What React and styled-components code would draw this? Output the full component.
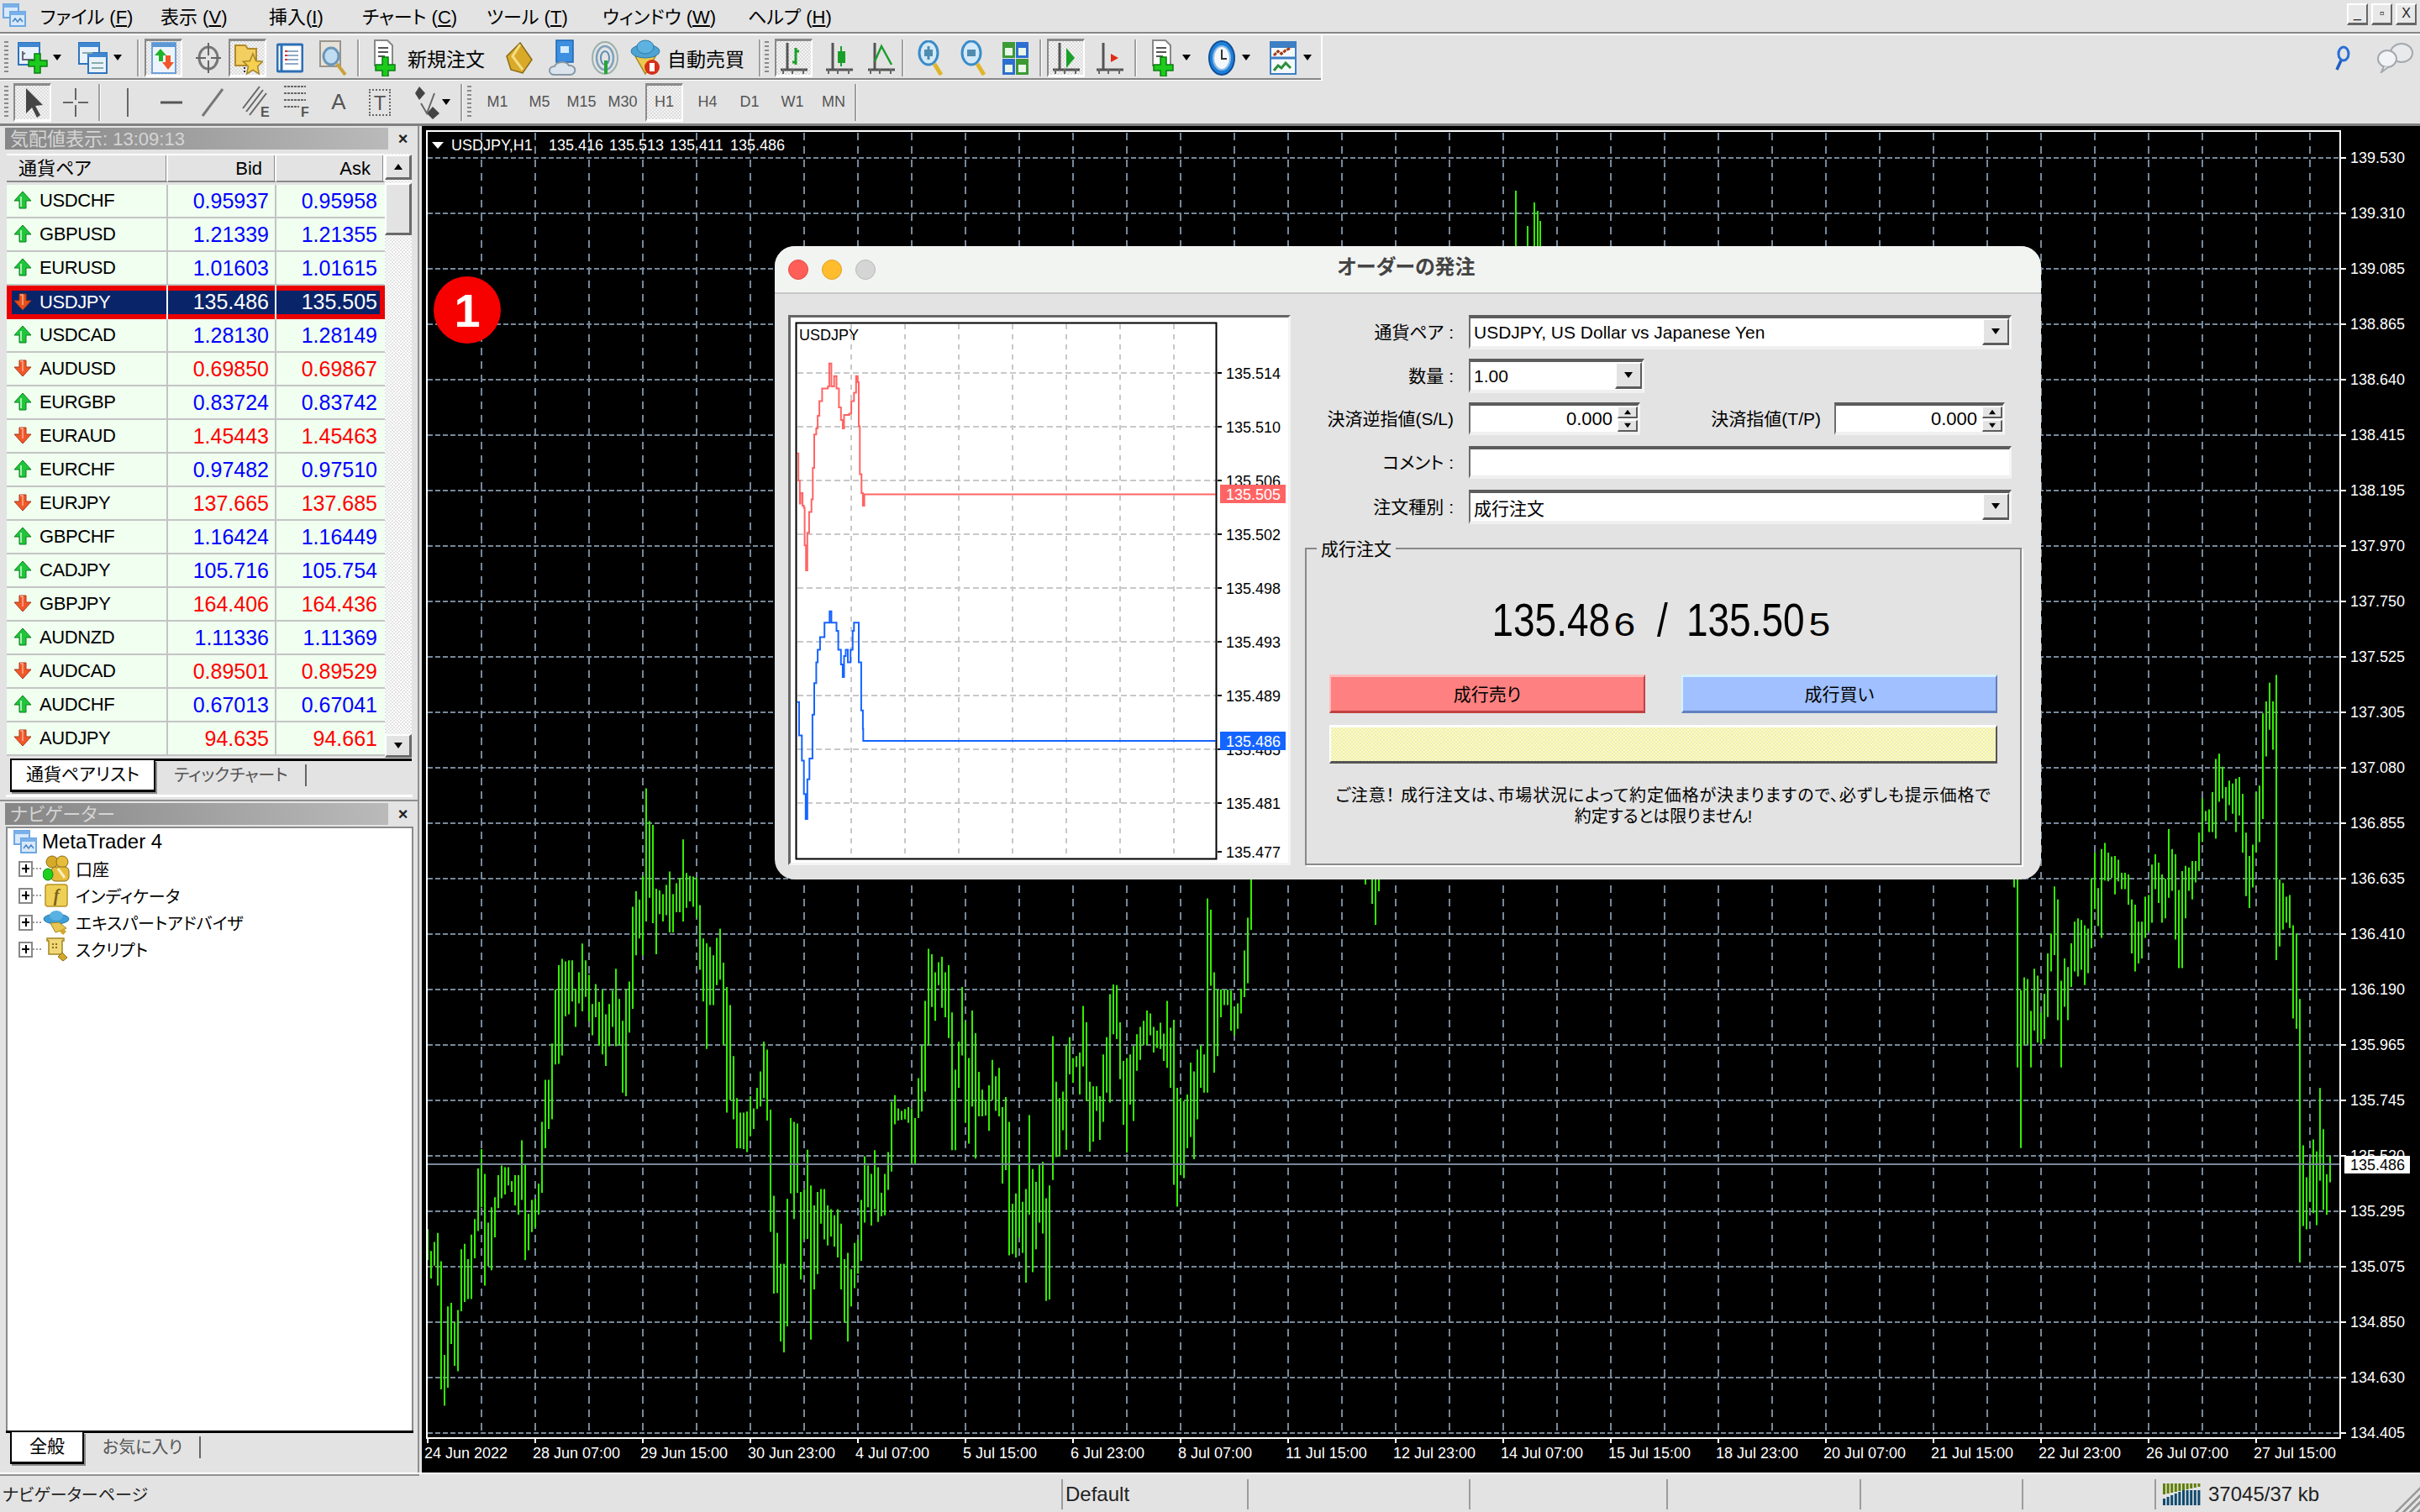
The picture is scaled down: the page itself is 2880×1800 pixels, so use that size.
import React from 'react'
import styled, { createGlobalStyle, css } from 'styled-components'

const GlobalStyle = createGlobalStyle`
  html, body { margin: 0; padding: 0; background: #e3e3e3; }
  body {
    font-family: "Liberation Sans", "Noto Sans CJK JP", sans-serif;
    font-feature-settings: "palt";
    color: #000;
  }
  * { box-sizing: border-box; }
`

const checker = (a, b, s = 4) => css`
  background: repeating-conic-gradient(${a} 0 25%, ${b} 0 50%) 0 0 / ${s}px ${s}px;
`

const Screen = styled.div`
  width: 2880px;
  height: 1800px;
  display: flex;
  flex-direction: column;
  overflow: hidden;
  background: #e3e3e3;
`

/* menu */
const MenuBar = styled.div`
  height: 42px;
  flex: none;
  display: flex;
  align-items: flex-start;
  border-bottom: 2px solid #fff;
  box-shadow: inset 0 -2px 0 #868686;
  padding-left: 3px;
`
const AppIcon = styled.div`
  width: 45px;
  padding-top: 4px;
`
const MenuItem = styled.div`
  width: ${p => p.$w}px;
  margin-left: ${p => p.$ml || 0}px;
  height: 38px;
  line-height: 41px;
  font-size: 22px;
  white-space: nowrap;
  u { text-underline-offset: 2px; }
`
const WinButtons = styled.div`
  margin-left: auto;
  display: flex;
  gap: 4px;
  padding: 4px 4px 0 0;
`
const WinButton = styled.div`
  width: 25px;
  height: 26px;
  background: #e8e8e8;
  border-top: 2px solid #fff;
  border-left: 2px solid #fff;
  border-right: 2px solid #666;
  border-bottom: 3px solid #666;
  font-size: 16px;
  line-height: 20px;
  text-align: center;
  color: #222;
`

/* toolbars */
const ToolRow = styled.div`
  flex: none;
  height: ${p => p.$h}px;
  display: flex;
  align-items: flex-start;
  ${p => p.$line && css`box-shadow: inset 0 -3px 0 #808080;`}
`
const Band = styled.div`
  height: ${p => p.$h}px;
  display: flex;
  align-items: center;
  padding-right: ${p => p.$pr || 0}px;
  ${p => p.$line && css`
    border-bottom: 1px solid #fff;
    box-shadow: inset 0 -2px 0 #868686;
    border-right: 2px solid #fff;
  `}
`
const RightTools = styled(Band)`
  margin-left: auto;
  padding-right: 7px;
`
const Grip = styled.div`
  flex: none;
  width: 5px;
  height: 40px;
  margin-left: ${p => p.$ml || 5}px;
  background: repeating-linear-gradient(#8a8a8a 0 2px, transparent 2px 5px);
`
const Sep = styled.div`
  flex: none;
  width: 2px;
  height: 44px;
  margin-left: ${p => p.$ml || 0}px;
  background: #a0a0a0;
  box-shadow: 1px 0 0 #fff;
`
const Tool = styled.div`
  flex: none;
  width: ${p => p.$w || 46}px;
  height: 46px;
  margin-left: ${p => p.$ml || 0}px;
  display: flex;
  align-items: center;
  justify-content: ${p => (p.$start ? 'flex-start' : 'center')};
  padding-left: ${p => p.$start || 0}px;
  gap: ${p => p.$gap || 0}px;
  font-size: ${p => p.$fs || 18}px;
  color: #555;
  ${p => p.$on && css`
    border-top: 3px solid #8a8a8a;
    border-left: 2px solid #8a8a8a;
    border-right: 2px solid #fff;
    border-bottom: 3px solid #fff;
    ${checker('#f4f4f4', '#dcdcdc')}
  `}
`
const ToolText = styled.span`
  font-size: 23px;
  color: #000;
  white-space: nowrap;
`
const FramedT = styled.span`
  display: inline-block;
  width: 26px;
  height: 32px;
  line-height: 30px;
  text-align: center;
  border: 2px dotted #666;
`
const TriDown = styled.div`
  width: 0;
  height: 0;
  border-left: 5px solid transparent;
  border-right: 5px solid transparent;
  border-top: 7px solid #000;
`
const TriUp = styled(TriDown)`
  border-top: 0;
  border-bottom: 7px solid #000;
`

/* main */
const Main = styled.div`
  flex: 1;
  display: flex;
  min-height: 0;
`
const LeftColumn = styled.div`
  flex: none;
  width: 502px;
  display: flex;
  flex-direction: column;
`
const Panel = styled.div`
  height: ${p => p.$h}px;
  flex: none;
  display: flex;
  flex-direction: column;
  width: 499px;
  padding: 2px 0 0 0;
  border-right: 2px solid #909090;
  border-bottom: 2px solid #909090;
  position: relative;
`
const TitleRow = styled.div`
  height: 26px;
  flex: none;
  display: flex;
  align-items: center;
`
const TitleBar = styled.div`
  width: 458px;
  margin-left: 6px;
  height: 26px;
  padding-left: 6px;
  line-height: 27px;
  font-size: 22px;
  color: #d4d4d4;
  background: linear-gradient(90deg, #868686, #bababa);
  white-space: nowrap;
`
const CloseX = styled.div`
  width: 35px;
  text-align: center;
  font-size: 20px;
  font-weight: bold;
  line-height: 26px;
  color: #222;
`
const ListWrap = styled.div`
  margin-top: 5px;
  height: 720px;
  display: flex;
  padding-left: 8px;
`
const Table = styled.div`
  width: 450px;
`
const HeadRow = styled.div`
  display: grid;
  grid-template-columns: 192px 129px 129px;
  height: 37px;
`
const HeadCell = styled.div`
  height: 34px;
  line-height: 32px;
  font-size: 22px;
  padding: 0 ${p => (p.$right ? 15 : 0)}px 0 ${p => (p.$right ? 0 : 14)}px;
  text-align: ${p => (p.$right ? 'right' : 'left')};
  border-top: 2px solid #fff;
  border-right: 2px solid #fff;
  border-bottom: 2px solid #8a8a8a;
  box-shadow: inset -1px 0 0 #8a8a8a;
`
const PairRow = styled.div`
  display: grid;
  grid-template-columns: 192px 129px 129px;
  height: 40px;
  background: ${p => (p.$sel ? '#0a246a' : '#f0fff0')};
  color: ${p => (p.$sel ? '#fff' : '#000')};
  ${p => p.$sel
    ? css`box-shadow: inset 0 0 0 6px #ea0000;`
    : css`border-bottom: 2px solid #c4c4c4;`}
`
const PairName = styled.div`
  display: flex;
  align-items: center;
  gap: 9px;
  padding-left: 8px;
  font-size: 22px;
  letter-spacing: -0.4px;
  border-right: 2px solid ${p => (p.$sel ? '#fff' : '#c4c4c4')};
`
const Quote = styled.div`
  line-height: 38px;
  font-size: 25px;
  text-align: right;
  padding-right: ${p => (p.$last ? 9 : 7)}px;
  color: ${p => p.$sel ? '#fff' : p.$down ? '#ff0000' : '#0000ff'};
  ${p => !p.$last && css`border-right: 2px solid ${p.$sel ? '#fff' : '#c4c4c4'};`}
`
const ScrollBar = styled.div`
  width: 32px;
  margin-left: 0;
  display: flex;
  flex-direction: column;
  height: 718px;
  ${checker('#fff', '#e3e3e3')}
`
const ScrollButton = styled.div`
  height: ${p => p.$h || 30}px;
  margin-top: ${p => p.$mt || 0}px;
  flex: none;
  display: flex;
  align-items: center;
  justify-content: center;
  background: #e3e3e3;
  border-top: 2px solid #fff;
  border-left: 2px solid #fff;
  border-right: 3px solid #6a6a6a;
  border-bottom: 3px solid #6a6a6a;
`
const TabStrip = styled.div`
  height: 40px;
  flex: none;
  margin-left: 12px;
  width: 478px;
  border-top: 3px solid #000;
  display: flex;
  align-items: flex-start;
`
const TabOn = styled.div`
  width: ${p => p.$w}px;
  height: 38px;
  margin-top: -1px;
  background: #fff;
  border-left: 2px solid #000;
  border-right: 2px solid #000;
  border-bottom: 3px solid #000;
  box-shadow: 2px 2px 0 #8a8a8a;
  font-size: 21px;
  line-height: 34px;
  text-align: center;
  white-space: nowrap;
`
const TabOff = styled.div`
  margin-left: 22px;
  font-size: 20px;
  line-height: 34px;
  color: #555;
  white-space: nowrap;
  display: flex;
  gap: 20px;
  &::after { content: ""; width: 2px; height: 26px; margin-top: 4px; background: #666; }
`
const TabEnd = styled.div`
  height: 3px;
  margin: ${p => p.$mt || 3}px 6px 0 7px;
  background: #fff;
  flex: none;
`
const TreeBox = styled.div`
  margin: 2px 5px 0 7px;
  height: 719px;
  flex: none;
  background: #fff;
  border-top: 2px solid #8a8a8a;
  border-left: 2px solid #8a8a8a;
  border-right: 2px solid #8a8a8a;
  padding: 0 0 0 5px;
`
const TreeRow = styled.div`
  height: ${p => p.$h || 32}px;
  display: flex;
  align-items: center;
  font-size: ${p => p.$fs || 20}px;
  white-space: nowrap;
`
const PlusBox = styled.div`
  width: 17px;
  height: 19px;
  margin-left: 8px;
  flex: none;
  border: 2px solid #888;
  background: linear-gradient(#000, #000) center / 9px 2px no-repeat,
    linear-gradient(#000, #000) center / 2px 10px no-repeat, #fff;
`
const Dots = styled.div`
  width: 12px;
  height: 2px;
  flex: none;
  background: repeating-linear-gradient(90deg, #999 0 2px, transparent 2px 4px);
`
const IconSlot = styled.div`
  width: 32px;
  flex: none;
  margin-right: ${p => p.$mr || 7}px;
  display: flex;
  justify-content: center;
`
const NavTabs = styled(TabStrip)`
  margin: 0 5px 0 7px;
  width: auto;
  height: 44px;
  padding-left: 5px;
  background: #e3e3e3;
`

/* chart */
const ChartArea = styled.div`
  position: relative;
  flex: 1;
  min-width: 0;
  background: #000;
  overflow: hidden;
`
const ChartSvg = styled.svg`
  display: block;
  font-family: "Liberation Sans", sans-serif;
`
const Badge = styled.div`
  position: absolute;
  left: 14px;
  top: 179px;
  width: 80px;
  height: 80px;
  border-radius: 50%;
  background: #f60000;
  color: #fff;
  font: bold 56px/82px "Liberation Sans", sans-serif;
  text-align: center;
`

/* order dialog */
const Dialog = styled.div`
  position: absolute;
  left: 420px;
  top: 143px;
  width: 1507px;
  height: 754px;
  border-radius: 24px;
  background: #e3e3e3;
  overflow: hidden;
`
const DialogTitle = styled.div`
  height: 57px;
  background: #f2f4f2;
  border-bottom: 2px solid #c6c6c6;
  display: flex;
  align-items: center;
  gap: 16px;
  padding-left: 16px;
  position: relative;
`
const Light = styled.div`
  width: 24px;
  height: 24px;
  border-radius: 50%;
  background: ${p => p.$c};
  border: 1px solid ${p => p.$b};
`
const TitleText = styled.div`
  position: absolute;
  left: 0;
  right: 4px;
  top: 9px;
  text-align: center;
  font-size: 24px;
  line-height: 32px;
  font-weight: bold;
  color: #444;
`
const DialogBody = styled.div`
  display: flex;
  padding: 25px 23px 0 16px;
  gap: 17px;
`
const MiniFrame = styled.div`
  width: 598px;
  height: 655px;
  flex: none;
  background: #fff;
  border-top: 3px solid #666;
  border-left: 3px solid #666;
  border-right: 3px solid #f4f4f4;
  border-bottom: 3px solid #f4f4f4;
`
const FormSide = styled.div`
  width: 853px;
  flex: none;
`
const FormRow = styled.div`
  display: flex;
  align-items: center;
  margin-bottom: ${p => p.$mb || 11}px;
  height: ${p => p.$h || 41}px;
`
const FormLabel = styled.div`
  width: ${p => p.$w || 177}px;
  margin-left: ${p => p.$ml || 0}px;
  margin-right: ${p => p.$mr || 18}px;
  padding-bottom: 3px;
  flex: none;
  text-align: right;
  font-size: 21px;
  white-space: nowrap;
`
const Field = styled.div`
  width: ${p => p.$w}px;
  height: 100%;
  flex: none;
  background: #fff;
  border-top: 4px solid #5c5c5c;
  border-left: 2px solid #6c6c6c;
  border-right: 3px solid #f6f6f6;
  border-bottom: 4px solid #f0f0f0;
  display: flex;
  align-items: center;
  justify-content: ${p => (p.$right ? 'flex-end' : 'space-between')};
  padding-left: 4px;
  font-size: ${p => p.$fs || 21}px;
  white-space: nowrap;
`
const ComboBtn = styled.div`
  width: 32px;
  height: 32px;
  flex: none;
  display: flex;
  align-items: center;
  justify-content: center;
  background: #e3e3e3;
  border-top: 2px solid #fff;
  border-left: 2px solid #fff;
  border-right: 2px solid #5c5c5c;
  border-bottom: 3px solid #5c5c5c;
  margin-top: -1px;
`
const SpinBox = styled.div`
  width: 24px;
  flex: none;
  margin-left: 6px;
  display: flex;
  flex-direction: column;
  gap: 2px;
`
const SpinBtn = styled.div`
  height: 14px;
  display: flex;
  align-items: center;
  justify-content: center;
  background: #e3e3e3;
  border-top: 1px solid #fff;
  border-left: 1px solid #fff;
  border-right: 2px solid #5c5c5c;
  border-bottom: 2px solid #5c5c5c;
  ${TriDown}, ${TriUp} { transform: scale(.8); }
`
const Group = styled.div`
  position: relative;
  margin-top: 28px;
  height: 378px;
  border: 2px solid #888;
  box-shadow: 2px 2px 0 #fff;
  padding: 0 27px;
`
const Legend = styled.div`
  position: absolute;
  left: 12px;
  top: -12px;
  padding: 0 5px;
  background: #e3e3e3;
  font-size: 21px;
  line-height: 24px;
`
const PriceLine = styled.div`
  height: 149px;
  padding-top: 14px;
  display: flex;
  align-items: center;
  justify-content: center;
  font-size: 46px;
  white-space: pre;
  transform: scaleY(1.2);
  small {
    display: inline-block;
    width: 18px;
    margin: 10px 10px 0 8px;
    font-size: 33px;
    transform: scaleX(1.4);
  }
  i { font-style: normal; margin: 0 22px 0 20px; }
`
const OrderButtons = styled.div`
  display: flex;
  justify-content: space-between;
`
const OrderButton = styled.div`
  width: 376px;
  height: 46px;
  background: ${p => p.$bg};
  border-top: 3px solid ${p => p.$hi};
  border-left: 2px solid ${p => p.$hi};
  border-right: 2px solid ${p => p.$lo};
  border-bottom: 3px solid ${p => p.$lo};
  font-size: 21px;
  line-height: 42px;
  text-align: center;
`
const YellowBar = styled.div`
  margin-top: 14px;
  height: 46px;
  border-top: 3px solid #fff;
  border-left: 2px solid #fff;
  border-right: 2px solid #555;
  border-bottom: 3px solid #555;
  ${checker('#ffffa8', '#ebebd0')}
`
const Note = styled.div`
  margin-top: 26px;
  font-size: 20px;
  line-height: 25px;
  text-align: center;
`
const NoteWide = styled.span`
  letter-spacing: .9px;
`

/* status */
const StatusBar = styled.div`
  height: 47px;
  flex: none;
  display: flex;
  border-top: 2px solid #fff;
  font-size: 24px;
  color: #222;
  position: relative;
`
const StatusCell = styled.div`
  width: ${p => p.$w}px;
  flex: none;
  display: flex;
  align-items: center;
  gap: 8px;
  padding: 2px 0 0 ${p => p.$pl || 5}px;
  font-size: ${p => p.$fs || 24}px;
  white-space: nowrap;
  ${p => p.$sep && css`
    &::before {
      content: "";
      position: absolute;
      width: 2px;
      height: 36px;
      margin: 0 0 0 ${-(p.$pl || 5)}px;
      background: #9c9c9c;
    }
  `}
`
const ResizeGrip = styled.div`
  position: absolute;
  right: 0;
  bottom: 0;
  width: 30px;
  height: 30px;
  background: repeating-linear-gradient(135deg, transparent 0 3px, #9a9a9a 3px 6px);
  clip-path: polygon(100% 0, 100% 100%, 0 100%);
`

/* icons */
const Svg = ({ w = 34, h = 38, vb, children }) => (
  <svg width={w} height={h} viewBox={vb || `0 0 ${w} ${h}`} style={{ display: 'block', flex: 'none' }}>{children}</svg>
)
const GreenPlus = ({ x = 0, y = 0 }) => (
  <path transform={`translate(${x} ${y})`} d="M7 0h7v8h8v7h-8v8H7v-8H0V8h7z" fill="#1ccb1c" stroke="#0b7d12" strokeWidth="1.5" />
)
const Win = ({ x, y, w, h }) => (
  <g>
    <rect x={x} y={y} width={w} height={h} fill="#e9f2fb" stroke="#2f74bd" strokeWidth="2" />
    <rect x={x} y={y} width={w} height={5} fill="#3f87d0" />
  </g>
)
const AppMark = ({ s = 1 }) => (
  <Svg w={28 * s} h={28 * s} vb="0 0 28 28">
    <rect x="1" y="1" width="18" height="16" fill="#d8e9fb" stroke="#6da7e2" strokeWidth="2" />
    <rect x="1" y="1" width="18" height="4" fill="#7ab0e8" />
    <rect x="9" y="10" width="18" height="17" fill="#d8e9fb" stroke="#6da7e2" strokeWidth="2" />
    <rect x="9" y="10" width="18" height="4" fill="#7ab0e8" />
    <path d="M12 22l3-4 3 4 3-4 3 4" fill="none" stroke="#4a86c8" strokeWidth="1.5" />
  </Svg>
)
const IconNewChart = () => (
  <Svg w={36} h={38}>
    <Win x={1} y={1} w={25} h={26} />
    <path d="M6 11v10h13M6 15l3-2" stroke="#667" strokeWidth="2" fill="none" />
    <GreenPlus x={13} y={14} />
  </Svg>
)
const IconProfiles = () => (
  <Svg w={36} h={38}>
    <Win x={1} y={1} w={24} h={25} />
    <Win x={12} y={13} w={22} h={24} />
    <path d="M5 13h12M16 25h14M16 31h14" stroke="#8aa" strokeWidth="2" />
  </Svg>
)
const IconMarket = () => (
  <Svg w={30} h={38}>
    <rect x="1" y="1" width="28" height="36" fill="#eef4fb" stroke="#6ea2d9" strokeWidth="2" />
    <rect x="1" y="1" width="28" height="5" fill="#5c97d6" />
    <path d="M9 8l7 8h-4v7H7v-7H2z" fill="#1fb52a" transform="translate(2 0)" />
    <path d="M20 16v8h4l-7 9-7-9h4v-8z" fill="#f0562a" transform="translate(3 0)" />
  </Svg>
)
const IconCross = () => (
  <Svg w={30} h={38}>
    <ellipse cx="15" cy="19" rx="11" ry="13" fill="none" stroke="#777" strokeWidth="3" />
    <path d="M15 1v15M15 22v15M0 19h12M18 19h12" stroke="#666" strokeWidth="2" />
  </Svg>
)
const IconFolderStar = () => (
  <Svg w={36} h={42}>
    <path d="M3 6h12l3 4h10v20H3z" fill="#f3cf62" stroke="#b18a2a" strokeWidth="2" />
    <path d="M24 16l3.600 8.500 8 .8-6 5.700 1.700 9-7.300-4.700-7.300 4.700 1.700-9-6-5.700 8-.8z" fill="#f6d04e" stroke="#a4842b" strokeWidth="1.500" />
    <path d="M14 32v8" stroke="#333" strokeDasharray="2 2" strokeWidth="2" />
  </Svg>
)
const IconNotebook = () => (
  <Svg w={32} h={38}>
    <rect x="1" y="3" width="30" height="32" rx="2" fill="#fff" stroke="#2d6fb5" strokeWidth="3" />
    <path d="M6 3v32" stroke="#2d6fb5" strokeWidth="3" />
    <path d="M10 11h16M10 16h16M10 21h16M10 26h16" stroke="#8fa9c6" strokeWidth="2" />
    <path d="M10 11h3M10 16h3M10 21h3" stroke="#d33" strokeWidth="2" />
  </Svg>
)
const IconDocLens = () => (
  <Svg w={36} h={44}>
    <rect x="2" y="2" width="24" height="30" fill="#e6e2da" stroke="#9a948c" strokeWidth="2" />
    <ellipse cx="15" cy="20" rx="9" ry="10" fill="#bfdcf2" stroke="#6a96b8" strokeWidth="3" />
    <path d="M22 29l10 13" stroke="#c9a13a" strokeWidth="4" />
  </Svg>
)
const IconNewOrder = () => (
  <Svg w={32} h={44}>
    <path d="M1 1h15l6 6v24H1z" fill="#fff" stroke="#888" strokeWidth="2" />
    <path d="M5 10h12M5 15h12M5 20h8" stroke="#555" strokeWidth="2" />
    <path d="M10 21h7v9h8v7h-8v7h-7v-7H2v-7h8z" fill="#1ccb1c" stroke="#0b7d12" strokeWidth="1.500" />
  </Svg>
)
const IconGem = () => (
  <Svg w={32} h={38}>
    <path d="M17 1l14 20-11 16-14-4L1 17z" fill="#d9a92a" stroke="#8a6b14" strokeWidth="1.500" />
    <path d="M17 3L8 17l12 16" fill="none" stroke="#f4dd84" strokeWidth="3" />
  </Svg>
)
const IconCloud = () => (
  <Svg w={34} h={44}>
    <rect x="9" y="1" width="20" height="26" fill="#3d8fe0" stroke="#1b67b5" strokeWidth="1.500" />
    <rect x="14" y="8" width="10" height="8" fill="#d4ecff" />
    <path d="M7 42c-8 0-8-10 0-10 2-6 14-7 17-1 9-1 10 11 1 11z" fill="#dbe4ec" stroke="#8798a8" strokeWidth="2" />
  </Svg>
)
const IconSignal = () => (
  <Svg w={34} h={42}>
    <ellipse cx="17" cy="21" rx="15" ry="19" fill="none" stroke="#9ab0a8" strokeWidth="2" />
    <ellipse cx="17" cy="21" rx="10" ry="14" fill="none" stroke="#7fa2bc" strokeWidth="2.500" />
    <ellipse cx="17" cy="21" rx="5" ry="8" fill="none" stroke="#5d8fb2" strokeWidth="2" />
    <path d="M18 24v16" stroke="#25a53a" strokeWidth="4" />
  </Svg>
)
const IconAuto = () => (
  <Svg w={36} h={44}>
    <path d="M6 20l12 21 12-21z" fill="#eec74d" stroke="#a48520" strokeWidth="1.500" />
    <ellipse cx="18" cy="14" rx="17" ry="8" fill="#4da3d3" stroke="#2d7aa8" />
    <ellipse cx="18" cy="9" rx="10" ry="8" fill="#5eb2e0" stroke="#2d7aa8" />
    <circle cx="26" cy="33" r="9" fill="#d63018" />
    <rect x="23" y="28" width="6" height="10" fill="#fff" />
  </Svg>
)
const IconBars = ({ c = '#1a9f2a', kind }) => (
  <Svg w={32} h={40}>
    <path d="M8 2v32M0 34h32" stroke="#555" strokeWidth="3" fill="none" />
    <path d="M3 33v6M14 33v6M27 33v6" stroke="#666" strokeWidth="2" />
    {kind === 'bar' && <path d="M18 8v20M14 25h4M18 12h4" stroke={c} strokeWidth="3" fill="none" />}
    {kind === 'candle' && <g><rect x="14" y="12" width="9" height="14" fill={c} /><path d="M18 6v24" stroke={c} strokeWidth="2" /></g>}
    {kind === 'line' && <path d="M8 24l8-18 12 22" stroke={c} strokeWidth="2.500" fill="none" />}
    {kind === 'shift' && <path d="M16 8l10 12-10 12z" fill={c} />}
    {kind === 'red' && <path d="M26 20l-9-5v10z" fill="#e02b10" />}
  </Svg>
)
const IconZoom = ({ plus }) => (
  <Svg w={32} h={42}>
    <ellipse cx="13" cy="15" rx="11" ry="14" fill="#d3e9f8" stroke="#3a8cc8" strokeWidth="3" />
    <rect x="8" y="11" width="10" height="8" fill="#4f8db0" />
    {plus && <path d="M13 7v16" stroke="#4f8db0" strokeWidth="3" />}
    <path d="M20 28l8 13" stroke="#e0b52a" strokeWidth="5" />
  </Svg>
)
const IconTile = () => (
  <Svg w={32} h={40}>
    <rect x="1" y="1" width="15" height="19" fill="#3d9a35" /><rect x="17" y="1" width="15" height="19" fill="#2c6fd0" />
    <rect x="1" y="21" width="15" height="19" fill="#2c6fd0" /><rect x="17" y="21" width="15" height="19" fill="#3d9a35" />
    <path d="M4 8h9v9H4zM20 8h9v9h-9zM4 28h9v9H4zM20 28h9v9h-9z" fill="#e9f6e8" />
  </Svg>
)
const IconClock = () => (
  <Svg w={34} h={44}>
    <ellipse cx="17" cy="22" rx="15" ry="20" fill="#1f80d8" stroke="#0e4f99" strokeWidth="2" />
    <ellipse cx="17" cy="22" rx="10" ry="14" fill="#f4f8fb" stroke="#8fbde6" strokeWidth="2" />
    <path d="M17 12v11h6" stroke="#333" strokeWidth="2" fill="none" />
  </Svg>
)
const IconIndic = () => (
  <Svg w={32} h={40}>
    <rect x="1" y="1" width="30" height="38" fill="#f5f8fb" stroke="#3d7fc4" strokeWidth="2" />
    <rect x="1" y="1" width="30" height="7" fill="#3d7fc4" />
    <path d="M0 20h32" stroke="#3d7fc4" strokeWidth="3" />
    <path d="M5 17l5-5 4 3 5-4 6-3" stroke="#a33a10" strokeWidth="3" fill="none" strokeDasharray="4 1" />
    <path d="M5 35l5-6 4 3 5-6 6 6" stroke="#2a8f3a" strokeWidth="3" fill="none" />
  </Svg>
)
const IconSearch = () => (
  <Svg w={22} h={30}>
    <ellipse cx="14" cy="10" rx="6" ry="8" fill="none" stroke="#2a6fd6" strokeWidth="3" />
    <path d="M11 18L6 29" stroke="#1f5ec0" strokeWidth="3.500" />
  </Svg>
)
const IconChat = () => (
  <Svg w={44} h={36}>
    <ellipse cx="30" cy="12" rx="13" ry="11" fill="#e8eaec" stroke="#a4a8ac" strokeWidth="2" />
    <ellipse cx="13" cy="19" rx="11" ry="10" fill="#f2f3f4" stroke="#a4a8ac" strokeWidth="2" />
    <path d="M9 28l-3 7 8-6" fill="#f2f3f4" stroke="#a4a8ac" strokeWidth="2" />
  </Svg>
)
const IconCursor = () => (
  <Svg w={26} h={38}>
    <path d="M5 2v30l7-7 6 12 4-3-6-11 9-1z" fill="#444" />
  </Svg>
)
const IconThinCross = () => (
  <Svg w={32} h={38}>
    <path d="M16 2v14M16 22v14M1 19h12M19 19h12" stroke="#666" strokeWidth="2" />
  </Svg>
)
const IconVLine = () => <Svg w={4} h={38}><path d="M2 2v34" stroke="#666" strokeWidth="2" /></Svg>
const IconHLine = () => <Svg w={26} h={10}><path d="M0 5h26" stroke="#555" strokeWidth="3" /></Svg>
const IconDiag = () => <Svg w={28} h={36}><path d="M2 34L26 2" stroke="#777" strokeWidth="3" /></Svg>
const IconFibo = () => (
  <Svg w={36} h={42}>
    <path d="M2 28L22 2M6 32L26 6M10 36L30 10" stroke="#666" strokeWidth="2" />
    <text x="23" y="38" fontSize="16" fontWeight="bold" fill="#555" fontFamily="Liberation Sans">E</text>
  </Svg>
)
const IconFiboF = () => (
  <Svg w={36} h={42}>
    <path d="M3 2h26M3 10h26M3 18h26M3 26h18" stroke="#666" strokeWidth="2" strokeDasharray="3 1" />
    <text x="23" y="38" fontSize="16" fontWeight="bold" fill="#555" fontFamily="Liberation Sans">F</text>
  </Svg>
)
const IconArrows = () => (
  <Svg w={32} h={42}>
    <path d="M6 2l7 8-7 8-5-8z" fill="#444" />
    <path d="M22 26l8 8-8 7-7-7z" fill="#444" />
    <path d="M8 22l7 12 9-24" stroke="#666" strokeWidth="2" fill="none" />
  </Svg>
)
const ArrowMark = ({ down, sel }) => (
  <Svg w={22} h={26} vb="0 0 22 26">
    {down
      ? <g><path d="M7 3h8v8h6L11 22 1 11h6z" fill={sel ? '#e8501c' : '#f2572b'} stroke="#a83a12" strokeWidth="1" /><path d="M8 4h3v12" stroke="#ffb090" strokeWidth="1.500" fill="none" /></g>
      : <g><path d="M11 2l10 11h-6v9H7v-9H1z" fill="#1fc63a" stroke="#0c7f1e" strokeWidth="1" /><path d="M9 8v12" stroke="#a8f0b0" strokeWidth="2" /></g>}
  </Svg>
)
const IconAccounts = () => (
  <Svg w={32} h={32}>
    <circle cx="11" cy="8" r="7" fill="#d6a92a" stroke="#8a6b14" />
    <circle cx="23" cy="8" r="7" fill="#e6bc3a" stroke="#8a6b14" />
    <rect x="10" y="14" width="21" height="17" rx="5" fill="#e6bc3a" stroke="#8a6b14" />
    <path d="M18 16l8 11" stroke="#f6eebc" strokeWidth="3" />
    <ellipse cx="6" cy="23" rx="6" ry="7" fill="#1fd01f" stroke="#0c8a12" />
  </Svg>
)
const IconFunc = () => (
  <Svg w={28} h={28}>
    <rect x="1" y="1" width="26" height="26" rx="3" fill="#efd056" stroke="#b79526" strokeWidth="1.500" />
    <text x="14" y="21" textAnchor="middle" fontSize="20" fontStyle="italic" fontWeight="bold" fill="#7a6020" fontFamily="Liberation Serif">f</text>
  </Svg>
)
const IconExpert = () => (
  <Svg w={32} h={30}>
    <ellipse cx="16" cy="11" rx="15" ry="6" fill="#3f9ed6" stroke="#2379a8" />
    <ellipse cx="16" cy="7" rx="8" ry="6" fill="#59b2e2" />
    <path d="M9 16l6 11 9-3 4-2-9-7z" fill="#e8c650" stroke="#a48520" />
    <path d="M24 22l4 4-4 4-4-4z" fill="#d4a82a" />
  </Svg>
)
const IconScript = () => (
  <Svg w={30} h={30}>
    <path d="M4 2h20v3h-2v16H6V5H4z" fill="#f0d878" stroke="#a48520" strokeWidth="1.500" />
    <path d="M10 9h8M10 13h8" stroke="#8a6b14" strokeWidth="2" strokeDasharray="2 2" />
    <path d="M22 19l6 6-5 4-6-5z" fill="#d4a82a" stroke="#8a6b14" />
  </Svg>
)
const IconMem = () => (
  <Svg w={46} h={26}>
    {[0, 1, 2, 3, 4, 5, 6, 7, 8, 9].map(i => (
      <g key={i}>
        <rect x={i * 4.6} y="0" width="3" height={4 + (9 - i)} fill="#5f7f00" />
        <rect x={i * 4.6} y={Math.max(8, 18 - i * 2)} width="3" height={26 - Math.max(8, 18 - i * 2)} fill="#0f4a6e" />
      </g>
    ))}
  </Svg>
)

/* data */
const pairs = [
  ['USDCHF', '0.95937', '0.95958', 0], ['GBPUSD', '1.21339', '1.21355', 0], ['EURUSD', '1.01603', '1.01615', 0],
  ['USDJPY', '135.486', '135.505', 1], ['USDCAD', '1.28130', '1.28149', 0], ['AUDUSD', '0.69850', '0.69867', 1],
  ['EURGBP', '0.83724', '0.83742', 0], ['EURAUD', '1.45443', '1.45463', 1], ['EURCHF', '0.97482', '0.97510', 0],
  ['EURJPY', '137.665', '137.685', 1], ['GBPCHF', '1.16424', '1.16449', 0], ['CADJPY', '105.716', '105.754', 0],
  ['GBPJPY', '164.406', '164.436', 1], ['AUDNZD', '1.11336', '1.11369', 0], ['AUDCAD', '0.89501', '0.89529', 1],
  ['AUDCHF', '0.67013', '0.67041', 0], ['AUDJPY', '94.635', '94.661', 1],
]
const prices = ['139.530', '139.310', '139.085', '138.865', '138.640', '138.415', '138.195', '137.970', '137.750', '137.525', '137.305', '137.080', '136.855', '136.635', '136.410', '136.190', '135.965', '135.745', '135.520', '135.295', '135.075', '134.850', '134.630', '134.405']
const dates = ['24 Jun 2022', '28 Jun 07:00', '29 Jun 15:00', '30 Jun 23:00', '4 Jul 07:00', '5 Jul 15:00', '6 Jul 23:00', '8 Jul 07:00', '11 Jul 15:00', '12 Jul 23:00', '14 Jul 07:00', '15 Jul 15:00', '18 Jul 23:00', '20 Jul 07:00', '21 Jul 15:00', '22 Jul 23:00', '26 Jul 07:00', '27 Jul 15:00']

// bar ends read off the reference, in crop units
const barsA = '1020,1105 1080,1155 1055,1120 1030,1175 1108,1460 1365,1505 1232,1455 1222,1335 1275,1395 1242,1410 1075,1245 1060,1220 1102,1212 1035,1212 992,1100 853,1025 800,960 868,1175 1002,1122 960,1133 932,1042 872,962 845,935 850,925 850,900 888,918 872,955 872,980 776,940 840,1105 978,1078 940,1028 936,1015 895,980 725,920 610,798 610,745 510,718 362,568 295,566 278,543 285,436 282,430 282,395 360,465 315,400 236,422 282,382 322,450 402,488 347,438 396,516 362,540 430,572 402,518 365,465 305,518 388,515 448,645 362,655 340,480 135,415 92,268 115,222 50,268 -190,175 -100,110 -90,180 85,265 90,155 100,175 75,158 38,205 100,205 70,150 55,150 -50,175 42,138 50,120 52,135 55,165 130,308 222,395 235,525 245,405 268,405 220,350 195,335 288,515 355,700 405,665 545,718 660,798 700,798 700,800 697,808 655,765 688,745 632,690 587,683 505,660 527,722 692,1027 928,1197 1030,1195 1115,1328 1115,1358 937,1287 715,922 725,992 730,920 918,1158 910,1048 802,1047 900,1323 955,1185 918,1143 910,1005 910,1048 955,1065 965,1040 982,1068 965,1098 1005,1185 1102,1275 1085,1328 1130,1232 1058,1182 1048,1142 940,1107 820,1002 845,960 868,1010 803,965 850,1000 920,985 868,982 808,912 670,862 652,732 688,722 695,720 690,718 685,728 688,843 715,842 605,715 515,697 393,642 250,515 265,410 315,448 287,350 272,412 315,438 295,495 425,803 582,803 505,632 355,543 450,728 550,785 420,683 482,826 588,710 637,710 665,708 625,750 555,665 600,695 577,710 685,895 657,858 725,1092 950,1088 922,1098 840,1042 945,1085 910,1167 707,980 855,1138 890,1075 842,1002 835,1032 935,1217 900,1213 490,885 615,822 660,820 642,748 515,802 493,595 550,618 545,575 535,650 407,573 452,668 615,807 628,780 628,695 655,775 540,725 493,645 375,672 348,485 350,498 452,608 558,733 550,810 540,678 517,723 485,585 465,555 448,515 420,515 428,488 465,535 475,522 453,525 483,558 393,577 467,632 445,898 632,958 660,872 668,880 650,798 563,767 587,828 527,718 515,632 540,645 112,645 143,352 315,590 362,545 362,438 362,405 362,405 365,475 410,488 400,470 360,428 255,383 165,345 60,198'
const barsB = '600,675 600,1200 975,1435 937,1135 942,1132 1035,1200 912,1092 932,1127 1040,1132 985,1117 867,1053 810,920 672,872 710,1062 947,1200 882,1023 907,1062 838,965 775,920 765,935 770,915 785,960 795,925 648,852 573,738 677,788 563,822 545,655 573,657 585,647 583,695 594,657 632,680 632,680 637,725 710,867 725,920 775,897 775,882 702,822 697,803 608,778 578,680 603,720 637,778 650,765 505,705 563,685 578,827 682,910 627,910 612,765 617,685 598,710 598,660 515,627 415,543 452,482 447,513 397,513 300,533 285,425 323,415 382,480 363,435 372,460 358,513 353,465 402,573 515,700 583,735 550,675 397,573 378,543 167,475 132,293 78,215 132,273 55,887 652,847 662,798 702,778 697,793 785,1057 810,1087 1000,1769 1427,1662 1520,1672 1475,1590 1410,1625 1445,1660 1260,1530 1380,1615 1512,1630 1458,1535'
const parseBars = s => s.split(' ').map(p => p.split(',').map(Number))
const hiddenBars = [[1804, 226, 295], [1818, 268, 295], [1826, 240, 295], [1830, 250, 295], [1833, 262, 295], [1625, 1040, 1052], [1633, 1040, 1075], [1637, 1040, 1100], [1641, 1040, 1060]]
const barsPath = [
  ...parseBars(barsA).map(([t, b], i) => `M${509 + 4 * i} ${(1020 + t / 2.306).toFixed(1)}V${(1020 + b / 2.306).toFixed(1)}`),
  ...parseBars(barsB).map(([t, b], i) => `M${2397 + 4 * i} ${(780 + t / 2.45).toFixed(1)}V${(780 + b / 2.45).toFixed(1)}`),
  ...hiddenBars.map(([x, t, b]) => `M${x} ${t}V${b}`),
].join('')

const range = (n, f) => Array.from({ length: n }, (_, i) => f(i))
const gridH = range(24, i => `M509 ${187 + 66 * i}H2785`).join('')
const gridV = range(35, i => `M${573 + 64 * i} 157V1709`).join('')

const redPts = [[70, 520], [74, 585], [78, 640], [80, 615], [86, 645], [90, 650], [92, 740], [96, 800], [100, 710], [105, 660], [112, 630], [116, 555], [120, 475], [126, 460], [130, 430], [135, 395], [143, 365], [160, 360], [164, 305], [170, 360], [178, 335], [185, 365], [192, 410], [198, 440], [203, 460], [207, 428], [222, 425], [228, 395], [236, 375], [242, 335], [247, 350], [250, 455], [253, 570], [258, 615], [262, 645], [266, 618], [1290, 618]]
const bluePts = [[70, 1115], [76, 1195], [84, 1255], [90, 1335], [95, 1395], [100, 1300], [106, 1250], [115, 1145], [120, 1070], [126, 1020], [130, 990], [137, 960], [150, 925], [165, 898], [170, 925], [185, 945], [190, 990], [198, 1025], [203, 1055], [207, 1005], [212, 990], [218, 1020], [226, 990], [232, 945], [236, 925], [247, 925], [250, 1020], [257, 1135], [262, 1180], [263, 1208], [1290, 1208]]
const stepPath = pts => pts.map(([x, y], i) => {
  const px = (920 + x / 2.45).toFixed(1)
  const py = (280 + y / 2.01).toFixed(1)
  return i === 0 ? `M${px} ${py}` : `H${px}V${py}`
}).join('')
const miniLabels = ['135.514', '135.510', '135.506', '135.502', '135.498', '135.493', '135.489', '135.485', '135.481']
const miniGridH = range(9, i => `M949 ${443 + 64 * i}H1447`).join('')
const miniGridV = range(7, i => `M${1013 + 64 * i} 385V1019`).join('')

function MainChart() {
  return (
    <ChartSvg width="2378" height="1604" viewBox="502 149 2378 1604">
      <path d={gridH} stroke="#778899" strokeWidth="2" strokeDasharray="6 3" fill="none" />
      <path d={gridV} stroke="#778899" strokeWidth="2" strokeDasharray="9 7" fill="none" />
      <path d={barsPath} stroke="#33ef00" strokeWidth="2" fill="none" />
      <path d="M509 1385H2785" stroke="#778899" strokeWidth="2" />
      <rect x="508" y="155" width="2277" height="1556" fill="none" stroke="#fff" strokeWidth="2" />
      {range(24, i => <path key={i} d={`M2785 ${187 + 66 * i}h7`} stroke="#fff" strokeWidth="2" />)}
      {range(18, i => <path key={i} d={`M${509 + 128 * i} 1711v6`} stroke="#fff" strokeWidth="2" />)}
      <path d="M514 168h14l-7 8z" fill="#fff" />
      <g fill="#fff" fontSize="18">
        <text x="537" y="178">USDJPY,H1</text>
        <text x="653" y="178">135.416</text>
        <text x="725" y="178">135.513</text>
        <text x="797" y="178">135.411</text>
        <text x="869" y="178">135.486</text>
        {prices.map((p, i) => <text key={p} x="2797" y={187 + 66 * i + 6}>{p}</text>)}
        {dates.map((d, i) => <text key={d} x={(i === 0 ? 505 : 506) + 128 * i} y="1735">{d}</text>)}
      </g>
      <rect x="2790" y="1375" width="78" height="21" fill="#fff" />
      <text x="2797" y="1392" fontSize="18" fill="#000">135.486</text>
    </ChartSvg>
  )
}

function MiniChart() {
  return (
    <ChartSvg width="592" height="649" viewBox="941 377 592 649">
      <path d={miniGridH} stroke="#c8c8c8" strokeWidth="2" strokeDasharray="7 4" fill="none" />
      <path d={miniGridV} stroke="#c8c8c8" strokeWidth="2" strokeDasharray="6 6" fill="none" />
      <path d={stepPath(redPts)} stroke="#ff6464" strokeWidth="2" fill="none" />
      <path d={stepPath(bluePts)} stroke="#1464ff" strokeWidth="2" fill="none" />
      <rect x="947.500" y="383.500" width="500" height="638" fill="none" stroke="#000" strokeWidth="2" />
      {range(10, i => <path key={i} d={`M1449 ${i === 9 ? 1013 : 443 + 64 * i}h5`} stroke="#000" strokeWidth="2" />)}
      <g fontSize="18" fill="#000">
        <text x="951" y="404">USDJPY</text>
        {miniLabels.map((l, i) => <text key={l} x="1459" y={443 + 64 * i + 7}>{l}</text>)}
        <text x="1459" y="1020">135.477</text>
      </g>
      <rect x="1452" y="576" width="78" height="22" fill="#ff6464" />
      <text x="1459" y="594" fontSize="18" fill="#fff">135.505</text>
      <rect x="1452" y="870" width="78" height="22" fill="#1464ff" />
      <text x="1459" y="888" fontSize="18" fill="#fff">135.486</text>
    </ChartSvg>
  )
}

function Combo({ w, children }) {
  return (
    <Field $w={w}>
      <span>{children}</span>
      <ComboBtn><TriDown /></ComboBtn>
    </Field>
  )
}

function Spin({ w, children }) {
  return (
    <Field $w={w} $right $fs={22}>
      <span>{children}</span>
      <SpinBox>
        <SpinBtn><TriUp /></SpinBtn>
        <SpinBtn><TriDown /></SpinBtn>
      </SpinBox>
    </Field>
  )
}

function OrderDialog() {
  return (
    <Dialog>
      <DialogTitle>
        <Light $c="#ff5f57" $b="#e14942" />
        <Light $c="#ffbd2e" $b="#dea123" />
        <Light $c="#d4d5d4" $b="#b8b8b8" />
        <TitleText>オーダーの発注</TitleText>
      </DialogTitle>
      <DialogBody>
        <MiniFrame><MiniChart /></MiniFrame>
        <FormSide>
          <FormRow>
            <FormLabel>通貨ペア :</FormLabel>
            <Combo w={646}>USDJPY, US Dollar vs Japanese Yen</Combo>
          </FormRow>
          <FormRow>
            <FormLabel>数量 :</FormLabel>
            <Combo w={209}>1.00</Combo>
          </FormRow>
          <FormRow $h={39} $mb={13}>
            <FormLabel>決済逆指値(S/L)</FormLabel>
            <Spin w={204}>0.000</Spin>
            <FormLabel $w={160} $ml={55} $mr={16}>決済指値(T/P)</FormLabel>
            <Spin w={203}>0.000</Spin>
          </FormRow>
          <FormRow $h={39} $mb={13}>
            <FormLabel>コメント :</FormLabel>
            <Field $w={646} />
          </FormRow>
          <FormRow>
            <FormLabel>注文種別 :</FormLabel>
            <Combo w={646}>成行注文</Combo>
          </FormRow>
          <Group>
            <Legend>成行注文</Legend>
            <PriceLine>135.48<small>6</small><i>/</i>135.50<small>5</small></PriceLine>
            <OrderButtons>
              <OrderButton $bg="#ff8080" $hi="#ffbcbc" $lo="#c24040">成行売り</OrderButton>
              <OrderButton $bg="#a0c0ff" $hi="#d4f2ff" $lo="#6080c0">成行買い</OrderButton>
            </OrderButtons>
            <YellowBar />
            <Note><NoteWide>ご注意！ 成行注文は、市場状況によって約定価格が決まりますので、必ずしも提示価格で</NoteWide><br />約定するとは限りません!</Note>
          </Group>
        </FormSide>
      </DialogBody>
    </Dialog>
  )
}

function MarketWatch() {
  return (
    <Panel $h={804}>
      <TitleRow>
        <TitleBar>気配値表示: 13:09:13</TitleBar>
        <CloseX>×</CloseX>
      </TitleRow>
      <ListWrap>
        <Table>
          <HeadRow>
            <HeadCell>通貨ペア</HeadCell>
            <HeadCell $right>Bid</HeadCell>
            <HeadCell $right>Ask</HeadCell>
          </HeadRow>
          {pairs.map(([name, bid, ask, down]) => {
            const sel = name === 'USDJPY'
            return (
              <PairRow key={name} $sel={sel}>
                <PairName $sel={sel}><ArrowMark down={!!down} sel={sel} />{name}</PairName>
                <Quote $sel={sel} $down={!!down}>{bid}</Quote>
                <Quote $sel={sel} $down={!!down} $last>{ask}</Quote>
              </PairRow>
            )
          })}
        </Table>
        <ScrollBar>
          <ScrollButton $h={30} $mt={1}><TriUp /></ScrollButton>
          <ScrollButton $h={62} $mt={4} />
          <ScrollButton $h={28} $mt={594}><TriDown /></ScrollButton>
        </ScrollBar>
      </ListWrap>
      <TabStrip>
        <TabOn $w={173}>通貨ペアリスト</TabOn>
        <TabOff>ティックチャート</TabOff>
      </TabStrip>
      <TabEnd />
    </Panel>
  )
}

function Navigator() {
  const items = [
    ['口座', <IconAccounts key="a" />],
    ['インディケータ', <IconFunc key="f" />],
    ['エキスパートアドバイザ', <IconExpert key="e" />],
    ['スクリプト', <IconScript key="s" />],
  ]
  return (
    <Panel $h={803}>
      <TitleRow>
        <TitleBar>ナビゲーター</TitleBar>
        <CloseX>×</CloseX>
      </TitleRow>
      <TreeBox>
        <TreeRow $h={32} $fs={24}>
          <IconSlot $mr={4}><AppMark /></IconSlot>MetaTrader 4
        </TreeRow>
        {items.map(([label, icon]) => (
          <TreeRow key={label}>
            <PlusBox /><Dots />
            <IconSlot>{icon}</IconSlot>{label}
          </TreeRow>
        ))}
      </TreeBox>
      <NavTabs>
        <TabOn $w={88}>全般</TabOn>
        <TabOff>お気に入り</TabOff>
      </NavTabs>
    </Panel>
  )
}

export default function App() {
  return (
    <Screen>
      <GlobalStyle />
      <MenuBar>
        <AppIcon><AppMark /></AppIcon>
        <MenuItem $w={143}>ファイル (<u>F</u>)</MenuItem>
        <MenuItem $w={129}>表示 (<u>V</u>)</MenuItem>
        <MenuItem $w={111}>挿入(<u>I</u>)</MenuItem>
        <MenuItem $w={148}>チャート (<u>C</u>)</MenuItem>
        <MenuItem $w={138}>ツール (<u>T</u>)</MenuItem>
        <MenuItem $w={173}>ウィンドウ (<u>W</u>)</MenuItem>
        <MenuItem $w={110}>ヘルプ (<u>H</u>)</MenuItem>
        <WinButtons>
          <WinButton>_</WinButton>
          <WinButton>▫</WinButton>
          <WinButton>X</WinButton>
        </WinButtons>
      </MenuBar>

      <ToolRow $h={54}>
        <Band $h={54} $line $pr={10}>
          <Grip />
          <Tool $w={42} $ml={8}><IconNewChart /></Tool>
          <Tool $w={16}><TriDown /></Tool>
          <Tool $w={42} $ml={14}><IconProfiles /></Tool>
          <Tool $w={16}><TriDown /></Tool>
          <Sep $ml={15} />
          <Tool $on $w={45} $ml={7}><IconMarket /></Tool>
          <Tool $ml={8}><IconCross /></Tool>
          <Tool $on $w={45} $ml={1}><IconFolderStar /></Tool>
          <Tool $ml={5}><IconNotebook /></Tool>
          <Tool $ml={6}><IconDocLens /></Tool>
          <Sep $ml={5} />
          <Tool $w={150} $ml={13} $start={5} $gap={8}><IconNewOrder /><ToolText>新規注文</ToolText></Tool>
          <Tool $w={44} $ml={6}><IconGem /></Tool>
          <Tool $w={44} $ml={8}><IconCloud /></Tool>
          <Tool $w={44} $ml={6}><IconSignal /></Tool>
          <Tool $w={150} $ml={6} $start={2} $gap={8}><IconAuto /><ToolText>自動売買</ToolText></Tool>
          <Sep $ml={5} />
          <Grip />
          <Tool $on $w={45} $ml={7}><IconBars kind="bar" /></Tool>
          <Tool $ml={9}><IconBars kind="candle" /></Tool>
          <Tool $ml={4}><IconBars kind="line" /></Tool>
          <Sep $ml={1} />
          <Tool $ml={10}><IconZoom plus /></Tool>
          <Tool $ml={5}><IconZoom /></Tool>
          <Tool $ml={3}><IconTile /></Tool>
          <Sep $ml={6} />
          <Tool $on $w={45} $ml={7}><IconBars kind="shift" /></Tool>
          <Tool $ml={7}><IconBars kind="red" c="#333" /></Tool>
          <Sep $ml={6} />
          <Tool $w={38} $ml={16}><IconNewOrder /></Tool>
          <Tool $w={12}><TriDown /></Tool>
          <Tool $ml={13}><IconClock /></Tool>
          <Tool $w={12}><TriDown /></Tool>
          <Tool $ml={15}><IconIndic /></Tool>
          <Tool $w={12}><TriDown /></Tool>
        </Band>
        <RightTools $h={54}>
          <Tool><IconSearch /></Tool>
          <Tool $ml={18}><IconChat /></Tool>
        </RightTools>
      </ToolRow>

      <ToolRow $h={54} $line>
        <Band $h={51}>
          <Grip />
          <Tool $on $w={45} $ml={6}><IconCursor /></Tool>
          <Tool $ml={6}><IconThinCross /></Tool>
          <Sep $ml={4} />
          <Tool $ml={10}><IconVLine /></Tool>
          <Tool $ml={6}><IconHLine /></Tool>
          <Tool $ml={3}><IconDiag /></Tool>
          <Tool $ml={6}><IconFibo /></Tool>
          <Tool $ml={2}><IconFiboF /></Tool>
          <Tool $ml={4} $fs={26}>A</Tool>
          <Tool $ml={3} $fs={24}>
            <FramedT>T</FramedT>
          </Tool>
          <Tool $w={36} $ml={16}><IconArrows /></Tool>
          <Tool $w={8}><TriDown /></Tool>
          <Sep $ml={13} />
          <Grip $ml={6} />
          <Tool $ml={8}>M1</Tool>
          <Tool $ml={4}>M5</Tool>
          <Tool $ml={4}>M15</Tool>
          <Tool $ml={3}>M30</Tool>
          <Tool $on $w={45} $ml={4}>H1</Tool>
          <Tool $ml={6}>H4</Tool>
          <Tool $ml={4}>D1</Tool>
          <Tool $ml={5}>W1</Tool>
          <Tool $ml={3}>MN</Tool>
          <Sep $ml={2} />
        </Band>
      </ToolRow>

      <Main>
        <LeftColumn>
          <MarketWatch />
          <Navigator />
        </LeftColumn>
        <ChartArea>
          <MainChart />
          <Badge>1</Badge>
          <OrderDialog />
        </ChartArea>
      </Main>

      <StatusBar>
        <StatusCell $w={1263} $pl={3} $fs={20}>ナビゲーターページ</StatusCell>
        <StatusCell $w={221} $sep>Default</StatusCell>
        <StatusCell $w={264} $sep />
        <StatusCell $w={235} $sep />
        <StatusCell $w={230} $sep />
        <StatusCell $w={193} $sep />
        <StatusCell $w={158} $sep />
        <StatusCell $w={316} $sep $pl={10}><IconMem />37045/37 kb</StatusCell>
        <ResizeGrip />
      </StatusBar>
    </Screen>
  )
}
